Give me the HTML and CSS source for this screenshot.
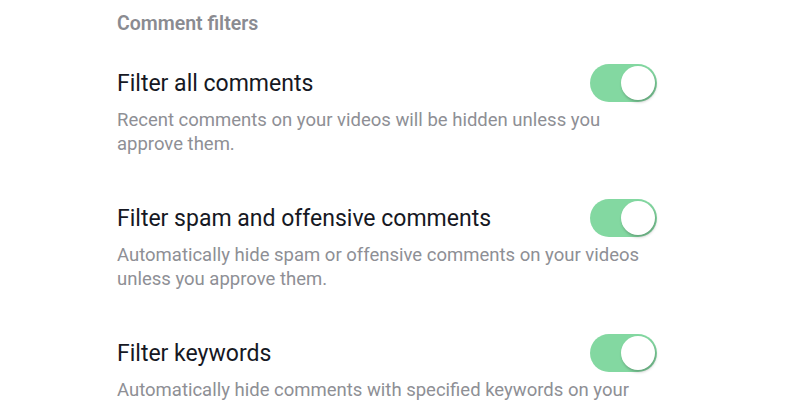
FILE: index.html
```html
<!DOCTYPE html>
<html lang="en">
<head>
    <meta charset="UTF-8">
    <title>Comment filters</title>
    <link rel="stylesheet" href="styles.css">
</head>
<body>
    <div class="page">
        <h2 class="section-title">Comment filters</h2>

        <div class="filter">
            <div class="filter-row">
                <span class="filter-name">Filter all comments</span>
                <span class="toggle"><span class="knob"></span></span>
            </div>
            <p class="filter-desc">Recent comments on your videos will be hidden unless you approve them.</p>
        </div>

        <div class="filter">
            <div class="filter-row">
                <span class="filter-name">Filter spam and offensive comments</span>
                <span class="toggle"><span class="knob"></span></span>
            </div>
            <p class="filter-desc">Automatically hide spam or offensive comments on your videos unless you approve them.</p>
        </div>

        <div class="filter">
            <div class="filter-row">
                <span class="filter-name">Filter keywords</span>
                <span class="toggle"><span class="knob"></span></span>
            </div>
            <p class="filter-desc">Automatically hide comments with specified keywords on your videos unless you approve them.</p>
        </div>
    </div>
</body>
</html>
```

FILE: styles.css
```css
body {
    margin: 0;
    background: #fff;
    font-family: 'Roboto', 'Liberation Sans', sans-serif;
    color: #161823;
}

.page {
    width: 540px;
    padding: 12px 0 0 117px;
}

.section-title {
    margin: 0 0 27px;
    font-size: 19.5px;
    font-weight: 600;
    line-height: 24px;
    color: #8a8b91;
}

.filter {
    margin-bottom: 42px;
}

.filter-row {
    display: flex;
    align-items: center;
    justify-content: space-between;
    height: 40px;
}

.filter-name {
    font-size: 23px;
}

.filter-desc {
    margin: 5px 0 0;
    width: 525px;
    font-size: 18.5px;
    line-height: 24px;
    color: #8e8f95;
}

/* переключатель */
.toggle {
    position: relative;
    width: 67px;
    height: 38px;
    border-radius: 19px;
    background: #83d8a1;
}

.knob {
    position: absolute;
    top: 2px;
    right: 2px;
    width: 34px;
    height: 34px;
    border-radius: 50%;
    background: #fff;
    box-shadow: 1px 2px 3px rgba(0, 0, 0, 0.25);
}
```
